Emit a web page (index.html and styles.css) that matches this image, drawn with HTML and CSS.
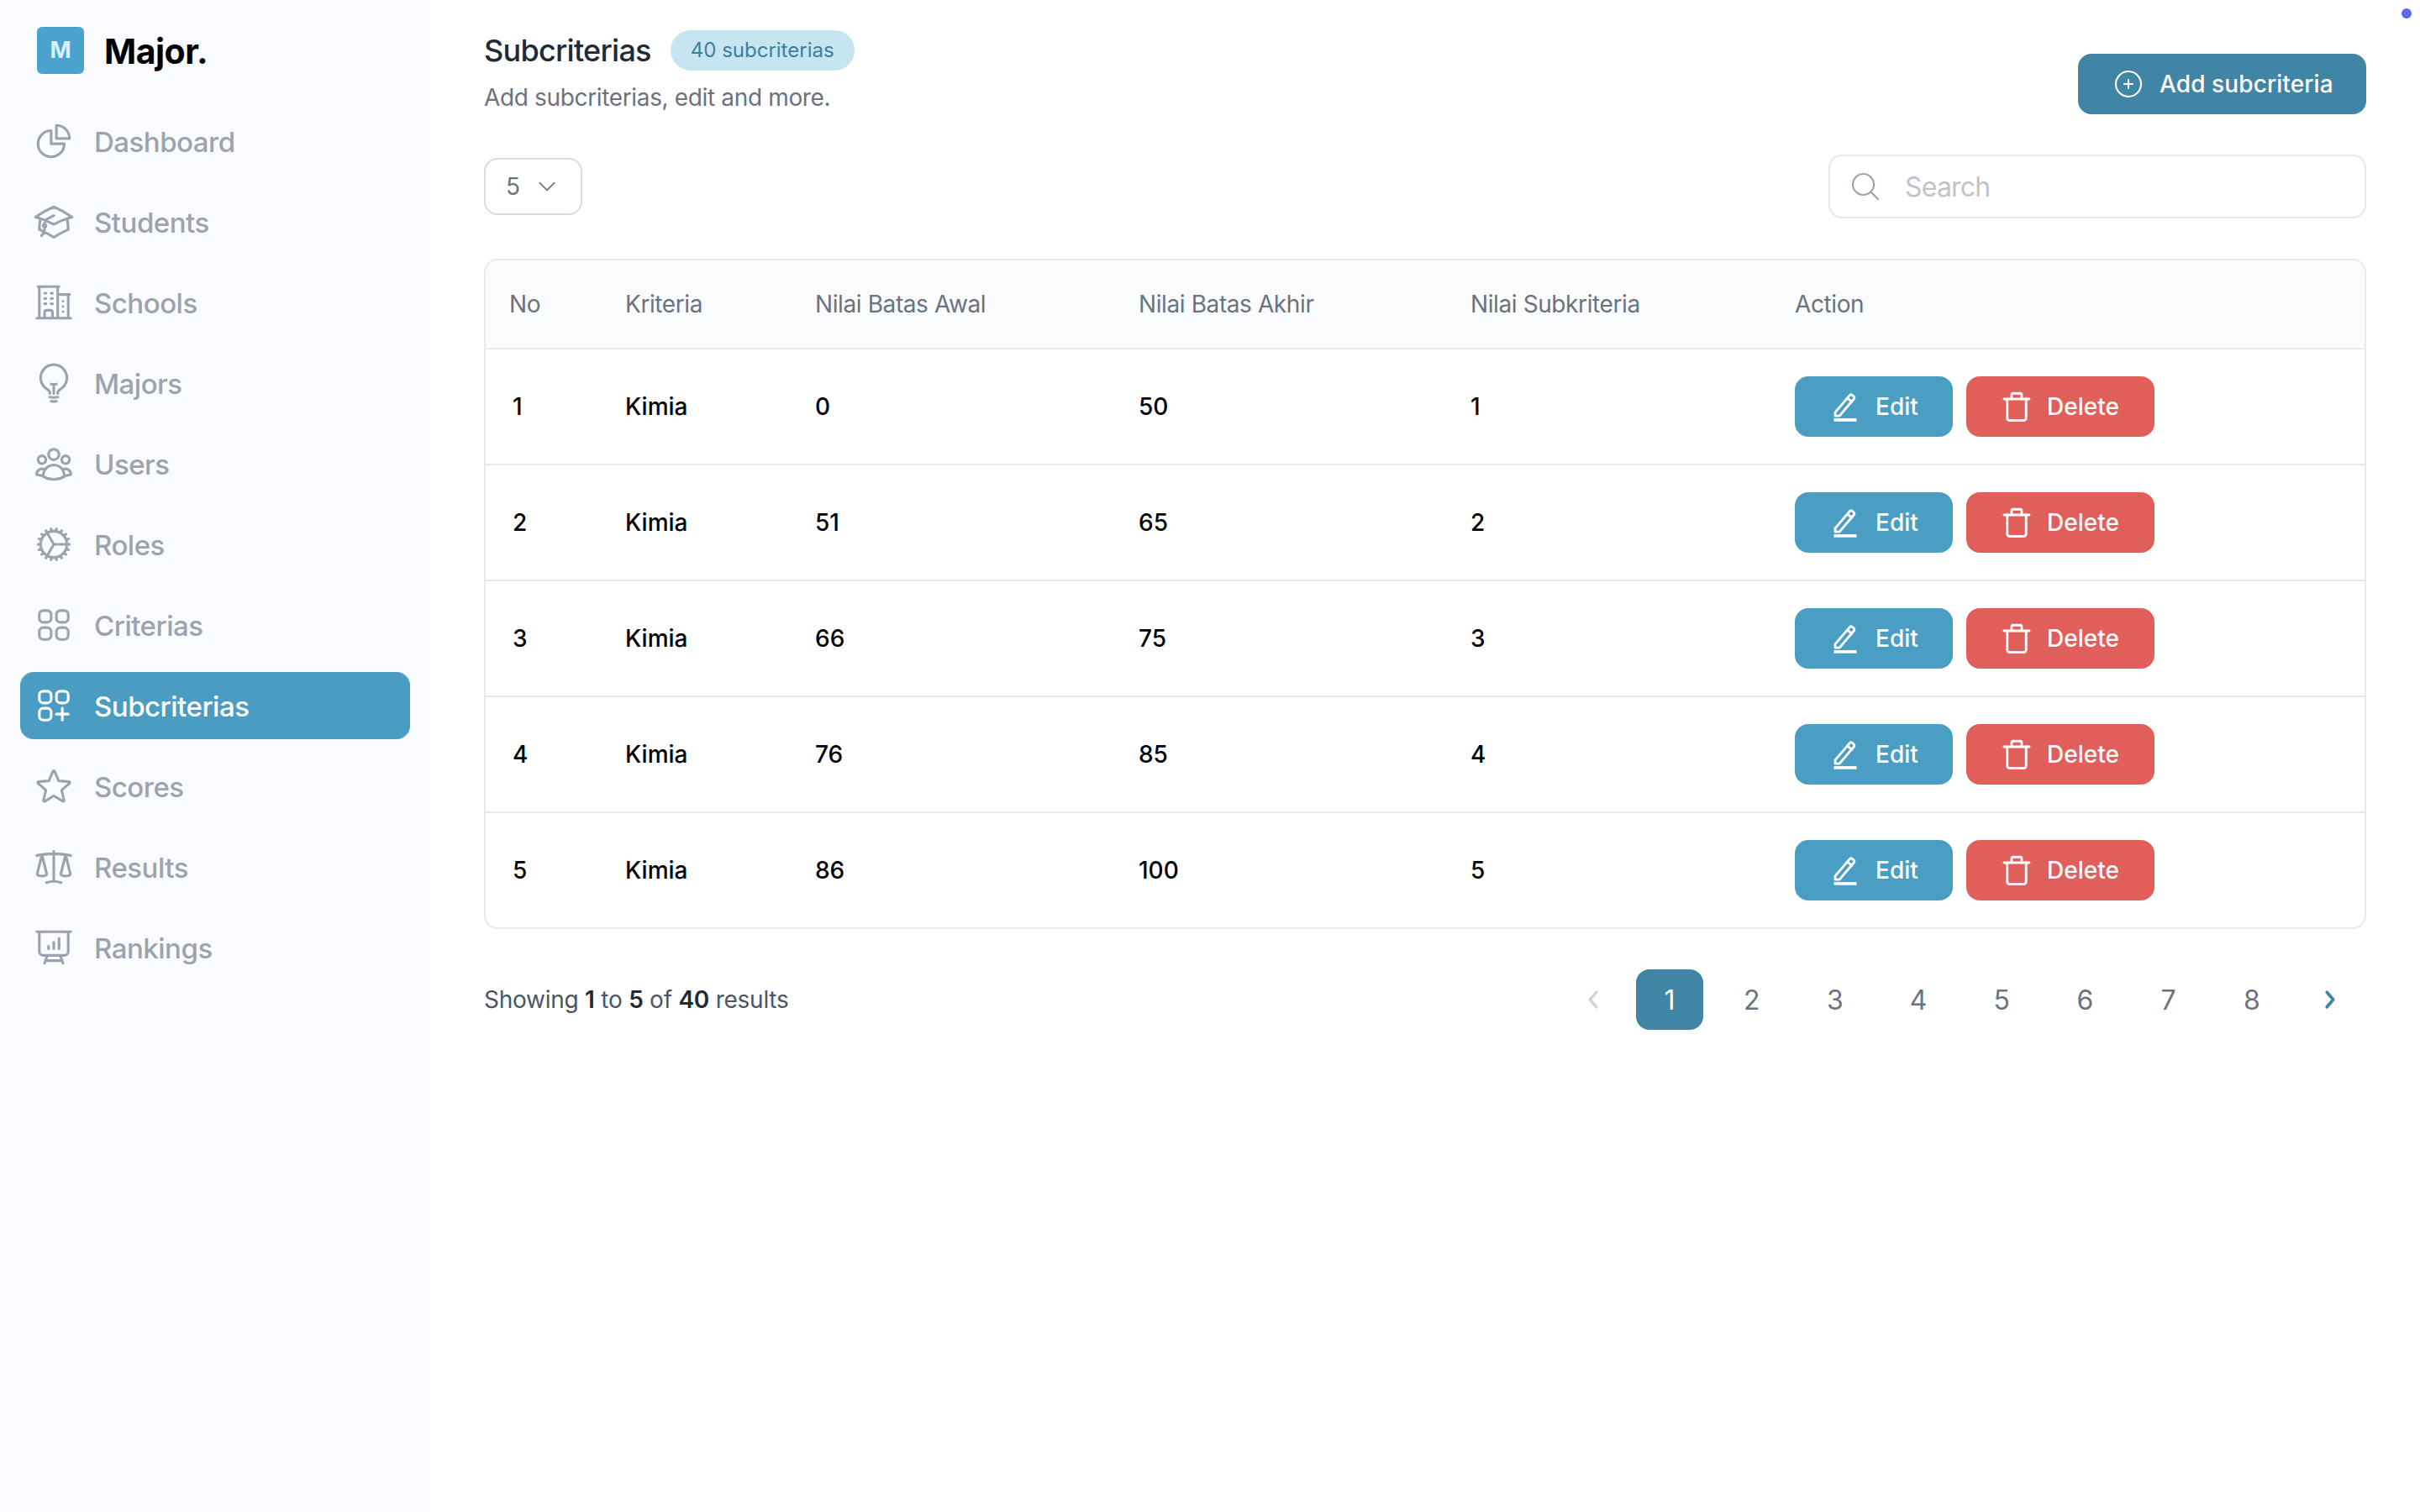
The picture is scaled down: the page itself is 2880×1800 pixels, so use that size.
FILE: index.html
```html
<!DOCTYPE html>
<html lang="en">
<head>
<meta charset="utf-8">
<title>Subcriterias</title>
<link rel="stylesheet" href="styles.css">
</head>
<body>
<svg class="sprite" xmlns="http://www.w3.org/2000/svg">
  <symbol id="i-pie" viewBox="0 0 24 24"><path d="M10.5 6a7.5 7.5 0 1 0 7.5 7.5h-7.5V6Z"/><path d="M13.5 10.5H21A7.5 7.5 0 0 0 13.5 3v7.5Z"/></symbol>
  <symbol id="i-cap" viewBox="0 0 24 24"><path d="M4.26 10.147a60.438 60.438 0 0 0-.491 6.347A48.62 48.62 0 0 1 12 20.904a48.62 48.62 0 0 1 8.232-4.41 60.46 60.46 0 0 0-.491-6.347m-15.482 0a50.636 50.636 0 0 0-2.658-.813A59.906 59.906 0 0 1 12 3.493a59.903 59.903 0 0 1 10.399 5.84c-.896.248-1.783.52-2.658.814m-15.482 0A50.717 50.717 0 0 1 12 13.489a50.702 50.702 0 0 1 7.74-3.342M6.75 15a.75.75 0 1 0 0-1.5.75.75 0 0 0 0 1.5Zm0 0v-3.675A55.378 55.378 0 0 1 12 8.443m-7.007 11.55A5.981 5.981 0 0 0 6.75 15.75v-1.5"/></symbol>
  <symbol id="i-building" viewBox="0 0 24 24"><path d="M2.25 21h19.5m-18-18v18m10.5-18v18m6-13.5V21M6.75 6.75h.75m-.75 3h.75m-.75 3h.75m3-6h.75m-.75 3h.75m-.75 3h.75M6.75 21v-3.375c0-.621.504-1.125 1.125-1.125h2.25c.621 0 1.125.504 1.125 1.125V21M3 3h12m-.75 4.5H21m-3.75 3.75h.008v.008h-.008v-.008Zm0 3h.008v.008h-.008v-.008Zm0 3h.008v.008h-.008v-.008Z"/></symbol>
  <symbol id="i-bulb" viewBox="0 0 24 24"><path d="M12 18v-5.25m0 0a6.01 6.01 0 0 0 1.5-.189m-1.5.189a6.01 6.01 0 0 1-1.5-.189m3.75 7.478a12.06 12.06 0 0 1-4.5 0m3.75 2.383a14.406 14.406 0 0 1-3 0M14.25 18v-.192c0-.983.658-1.823 1.508-2.316a7.5 7.5 0 1 0-7.517 0c.85.493 1.509 1.333 1.509 2.316V18"/></symbol>
  <symbol id="i-users" viewBox="0 0 24 24"><path d="M18 18.72a9.094 9.094 0 0 0 3.741-.479 3 3 0 0 0-4.682-2.72m.94 3.198.001.031c0 .225-.012.447-.037.666A11.944 11.944 0 0 1 12 21c-2.17 0-4.207-.576-5.963-1.584A6.062 6.062 0 0 1 6 18.719m12 0a5.971 5.971 0 0 0-.941-3.197m0 0A5.995 5.995 0 0 0 12 12.75a5.995 5.995 0 0 0-5.058 2.772m0 0a3 3 0 0 0-4.681 2.72 8.986 8.986 0 0 0 3.74.477m.94-3.197a5.971 5.971 0 0 0-.94 3.197M15 6.75a3 3 0 1 1-6 0 3 3 0 0 1 6 0Zm6 3a2.25 2.25 0 1 1-4.5 0 2.25 2.25 0 0 1 4.5 0Zm-13.5 0a2.25 2.25 0 1 1-4.5 0 2.25 2.25 0 0 1 4.5 0Z"/></symbol>
  <symbol id="i-cog" viewBox="0 0 24 24"><path d="M4.5 12a7.5 7.5 0 0 0 15 0m-15 0a7.5 7.5 0 1 1 15 0m-15 0H3m16.5 0H21m-1.5 0H12m-8.457 3.077 1.41-.513m14.095-5.13 1.41-.513M5.106 17.785l1.15-.964m11.49-9.642 1.149-.964M7.501 19.795l.75-1.3m7.5-12.99.75-1.3m-6.063 16.658.26-1.477m2.605-14.772.26-1.477m0 17.726-.26-1.477M10.698 4.614l-.26-1.477M16.5 19.794l-.75-1.299M7.5 4.205 12 12m6.894 5.785-1.149-.964M6.256 7.178l-1.15-.964m15.352 8.864-1.41-.513M4.954 9.435l-1.41-.514M12.002 12l-3.75 6.495"/></symbol>
  <symbol id="i-squares" viewBox="0 0 24 24"><path d="M3.75 6A2.25 2.25 0 0 1 6 3.75h2.25A2.25 2.25 0 0 1 10.5 6v2.25a2.25 2.25 0 0 1-2.25 2.25H6a2.25 2.25 0 0 1-2.25-2.25V6ZM3.75 15.75A2.25 2.25 0 0 1 6 13.5h2.25a2.25 2.25 0 0 1 2.25 2.25V18a2.25 2.25 0 0 1-2.25 2.25H6A2.25 2.25 0 0 1 3.75 18v-2.25ZM13.5 6a2.25 2.25 0 0 1 2.25-2.25H18A2.25 2.25 0 0 1 20.25 6v2.25A2.25 2.25 0 0 1 18 10.5h-2.25a2.25 2.25 0 0 1-2.25-2.25V6ZM13.5 15.75a2.25 2.25 0 0 1 2.25-2.25H18a2.25 2.25 0 0 1 2.25 2.25V18A2.25 2.25 0 0 1 18 20.25h-2.25A2.25 2.25 0 0 1 13.5 18v-2.25Z"/></symbol>
  <symbol id="i-squares-plus" viewBox="0 0 24 24"><path d="M13.5 16.875h3.375m0 0h3.375m-3.375 0V13.5m0 6.75V16.875M6 10.5h2.25a2.25 2.25 0 0 0 2.25-2.25V6a2.25 2.25 0 0 0-2.25-2.25H6A2.25 2.25 0 0 0 3.75 6v2.25A2.25 2.25 0 0 0 6 10.5Zm0 9.75h2.25A2.25 2.25 0 0 0 10.5 18v-2.25a2.25 2.25 0 0 0-2.25-2.25H6a2.25 2.25 0 0 0-2.25 2.25V18A2.25 2.25 0 0 0 6 20.25Zm9.75-9.75H18a2.25 2.25 0 0 0 2.25-2.25V6A2.25 2.25 0 0 0 18 3.75h-2.25A2.25 2.25 0 0 0 13.5 6v2.25a2.25 2.25 0 0 0 2.25 2.25Z"/></symbol>
  <symbol id="i-star" viewBox="0 0 24 24"><path d="M11.48 3.499a.562.562 0 0 1 1.04 0l2.125 5.111a.563.563 0 0 0 .475.345l5.518.442c.499.04.701.663.321.988l-4.204 3.602a.563.563 0 0 0-.182.557l1.285 5.385a.562.562 0 0 1-.84.61l-4.725-2.885a.562.562 0 0 0-.586 0L6.982 20.54a.562.562 0 0 1-.84-.61l1.285-5.386a.562.562 0 0 0-.182-.557l-4.204-3.602a.562.562 0 0 1 .321-.988l5.518-.442a.563.563 0 0 0 .475-.345L11.48 3.5Z"/></symbol>
  <symbol id="i-scale" viewBox="0 0 24 24"><path d="M12 3v17.25m0 0c-1.472 0-2.882.265-4.185.75M12 20.25c1.472 0 2.882.265 4.185.75M18.75 4.97A48.416 48.416 0 0 0 12 4.5c-2.291 0-4.545.16-6.75.47m13.5 0c1.01.143 2.01.317 3 .52m-3-.52 2.62 10.726c.122.499-.106 1.028-.589 1.202a5.988 5.988 0 0 1-2.031.352 5.988 5.988 0 0 1-2.031-.352c-.483-.174-.711-.703-.59-1.202L18.75 4.971Zm-16.5.52c.99-.203 1.99-.377 3-.52m0 0 2.62 10.726c.122.499-.106 1.028-.589 1.202a5.989 5.989 0 0 1-2.031.352 5.989 5.989 0 0 1-2.031-.352c-.483-.174-.711-.703-.59-1.202L5.25 4.971Z"/></symbol>
  <symbol id="i-board" viewBox="0 0 24 24"><path d="M3.75 3v11.25A2.25 2.25 0 0 0 6 16.5h2.25M3.75 3h-1.5m1.5 0h16.5m0 0h1.5m-1.5 0v11.25A2.25 2.25 0 0 1 18 16.5h-2.25m-7.5 0h7.5m-7.5 0-1 3m8.5-3 1 3m0 0 .5 1.5m-.5-1.5h-9.5m0 0-.5 1.5M9 11.25v1.5M12 9v3.75m3-6v6"/></symbol>
  <symbol id="i-plus" viewBox="0 0 24 24"><path d="M12 9v6m3-3H9m12 0a9 9 0 1 1-18 0 9 9 0 0 1 18 0Z"/></symbol>
  <symbol id="i-search" viewBox="0 0 24 24"><path d="m21 21-5.197-5.197m0 0A7.5 7.5 0 1 0 5.196 5.196a7.5 7.5 0 0 0 10.607 10.607Z"/></symbol>
  <symbol id="i-chev" viewBox="0 0 24 24"><path d="m19.5 8.25-7.5 7.5-7.5-7.5"/></symbol>
  <symbol id="i-left" viewBox="0 0 24 24"><path d="M15 5l-6 7 6 7"/></symbol>
  <symbol id="i-right" viewBox="0 0 24 24"><path d="M9 5l6 7-6 7"/></symbol>
  <symbol id="i-edit" viewBox="0 0 24 24"><path d="M4 16.6 15.4 3.2a1.6 1.6 0 0 1 2.2-.2l1 .8a1.6 1.6 0 0 1 .2 2.2L7.4 19.4H4v-2.8Z"/><path d="M13.6 5.3l3.6 3"/><path class="edit-line" d="M3 22.600h18"/></symbol>
  <symbol id="i-trash" viewBox="0 0 24 24"><path d="M2 6h20"/><path d="M8 6V2.8A1.3 1.3 0 0 1 9.3 1.500h5.400A1.300 1.300 0 0 1 16 2.800V6"/><path d="M4.500 6v15a2 2 0 0 0 2 2h11a2 2 0 0 0 2-2V6"/></symbol>
</svg>

<div class="dot"></div>

<div class="app">
  <aside class="sidebar">
    <div class="brand">
      <div class="brand-mark">M</div>
      <div class="brand-name">Major.</div>
    </div>
    <nav class="nav">
      <a class="nav-item"><svg class="nav-icon"><use href="#i-pie"/></svg><span>Dashboard</span></a>
      <a class="nav-item"><svg class="nav-icon"><use href="#i-cap"/></svg><span>Students</span></a>
      <a class="nav-item"><svg class="nav-icon"><use href="#i-building"/></svg><span>Schools</span></a>
      <a class="nav-item"><svg class="nav-icon"><use href="#i-bulb"/></svg><span>Majors</span></a>
      <a class="nav-item"><svg class="nav-icon"><use href="#i-users"/></svg><span>Users</span></a>
      <a class="nav-item"><svg class="nav-icon"><use href="#i-cog"/></svg><span>Roles</span></a>
      <a class="nav-item"><svg class="nav-icon"><use href="#i-squares"/></svg><span>Criterias</span></a>
      <a class="nav-item active"><svg class="nav-icon"><use href="#i-squares-plus"/></svg><span>Subcriterias</span></a>
      <a class="nav-item"><svg class="nav-icon"><use href="#i-star"/></svg><span>Scores</span></a>
      <a class="nav-item"><svg class="nav-icon"><use href="#i-scale"/></svg><span>Results</span></a>
      <a class="nav-item"><svg class="nav-icon"><use href="#i-board"/></svg><span>Rankings</span></a>
    </nav>
  </aside>

  <main class="main">
    <header class="page-head">
      <div class="page-title-block">
        <div class="title-row">
          <h1 class="title">Subcriterias</h1>
          <span class="badge">40 subcriterias</span>
        </div>
        <p class="subtitle">Add subcriterias, edit and more.</p>
      </div>
      <button class="btn btn-add"><svg class="btn-add-icon"><use href="#i-plus"/></svg>Add subcriteria</button>
    </header>

    <div class="toolbar">
      <div class="select"><span>5</span><svg class="select-icon"><use href="#i-chev"/></svg></div>
      <div class="search"><svg class="search-icon"><use href="#i-search"/></svg><span>Search</span></div>
    </div>

    <div class="table-card">
      <table class="table">
        <colgroup>
          <col class="c-no"><col class="c-kriteria"><col class="c-awal"><col class="c-akhir"><col class="c-sub"><col>
        </colgroup>
        <thead>
          <tr><th>No</th><th>Kriteria</th><th>Nilai Batas Awal</th><th>Nilai Batas Akhir</th><th>Nilai Subkriteria</th><th>Action</th></tr>
        </thead>
        <tbody>
          <tr><td>1</td><td>Kimia</td><td>0</td><td>50</td><td>1</td><td><div class="actions"><button class="btn btn-edit"><svg class="edit-icon"><use href="#i-edit"/></svg>Edit</button><button class="btn btn-delete"><svg class="trash-icon"><use href="#i-trash"/></svg>Delete</button></div></td></tr>
          <tr><td>2</td><td>Kimia</td><td>51</td><td>65</td><td>2</td><td><div class="actions"><button class="btn btn-edit"><svg class="edit-icon"><use href="#i-edit"/></svg>Edit</button><button class="btn btn-delete"><svg class="trash-icon"><use href="#i-trash"/></svg>Delete</button></div></td></tr>
          <tr><td>3</td><td>Kimia</td><td>66</td><td>75</td><td>3</td><td><div class="actions"><button class="btn btn-edit"><svg class="edit-icon"><use href="#i-edit"/></svg>Edit</button><button class="btn btn-delete"><svg class="trash-icon"><use href="#i-trash"/></svg>Delete</button></div></td></tr>
          <tr><td>4</td><td>Kimia</td><td>76</td><td>85</td><td>4</td><td><div class="actions"><button class="btn btn-edit"><svg class="edit-icon"><use href="#i-edit"/></svg>Edit</button><button class="btn btn-delete"><svg class="trash-icon"><use href="#i-trash"/></svg>Delete</button></div></td></tr>
          <tr><td>5</td><td>Kimia</td><td>86</td><td>100</td><td>5</td><td><div class="actions"><button class="btn btn-edit"><svg class="edit-icon"><use href="#i-edit"/></svg>Edit</button><button class="btn btn-delete"><svg class="trash-icon"><use href="#i-trash"/></svg>Delete</button></div></td></tr>
        </tbody>
      </table>
    </div>

    <footer class="table-foot">
      <p class="showing">Showing <b>1</b> to <b>5</b> of <b>40</b> results</p>
      <nav class="pager">
        <span class="pager-arrow prev"><svg class="pager-icon"><use href="#i-left"/></svg></span>
        <span class="page current">1</span>
        <span class="page">2</span>
        <span class="page">3</span>
        <span class="page">4</span>
        <span class="page">5</span>
        <span class="page">6</span>
        <span class="page">7</span>
        <span class="page">8</span>
        <span class="pager-arrow next"><svg class="pager-icon"><use href="#i-right"/></svg></span>
      </nav>
    </footer>
  </main>
</div>
</body>
</html>
```

FILE: styles.css
```css
* { box-sizing: border-box; }

html, body {
  margin: 0;
  padding: 0;
  height: 1800px;
  background: #fff;
  font-family: "Inter", "Liberation Sans", sans-serif;
}

.sprite { display: none; }

svg {
  fill: none;
  stroke: currentColor;
  stroke-width: 1.5;
  stroke-linecap: round;
  stroke-linejoin: round;
}

.dot {
  position: absolute;
  top: 10px;
  right: 10px;
  width: 12px;
  height: 12px;
  border-radius: 50%;
  background: #6366f1;
}

.app {
  display: flex;
  height: 1800px;
}

.sidebar {
  width: 512px;
  flex: none;
  background: #f9fbfe;
  padding: 31px 24px 0;
}

.brand {
  display: flex;
  align-items: center;
  gap: 24px;
  padding-left: 20px;
  height: 57px;
}

.brand-mark {
  width: 56px;
  height: 56px;
  border-radius: 6px;
  background: #4ba3cd;
  color: #d9f0f8;
  font-size: 27px;
  font-weight: 700;
  display: flex;
  align-items: center;
  justify-content: center;
}

.brand-name {
  margin-top: 2px;
  font-size: 41px;
  font-weight: 700;
  color: #000;
  letter-spacing: -0.5px;
}

.nav {
  display: flex;
  flex-direction: column;
  gap: 16px;
  margin-top: 40px;
}

.nav-item {
  display: flex;
  align-items: center;
  height: 80px;
  padding-left: 15px;
  gap: 23px;
  border-radius: 16px;
  font-size: 33px;
  font-weight: 500;
  letter-spacing: -0.5px;
  color: #9ca3af;
}

.nav-item span {
  margin-top: 2px;
}

.nav-item.active {
  background: #4b9cc2;
  color: #fff;
}

.nav-icon {
  width: 50px;
  height: 50px;
  flex: none;
}

.main {
  flex: 1;
  padding: 36px 64px 0;
  min-width: 0;
}

.page-head {
  display: flex;
  justify-content: space-between;
  align-items: flex-start;
  height: 100px;
}

.title-row {
  display: flex;
  align-items: center;
  gap: 23px;
}

.title {
  margin: 0;
  font-size: 36px;
  font-weight: 500;
  line-height: 48px;
  letter-spacing: -0.75px;
  color: #1f2937;
}

.badge {
  height: 48px;
  border-radius: 24px;
  padding: 0 24px;
  background: #c5e5f0;
  color: #3b7f9f;
  font-size: 24px;
  line-height: 48px;
}

.subtitle {
  margin: 12px 0 0;
  font-size: 28px;
  line-height: 40px;
  letter-spacing: -0.35px;
  color: #6b7280;
}

.btn {
  display: flex;
  align-items: center;
  height: 72px;
  border: 0;
  border-radius: 16px;
  color: #fff;
  font-family: inherit;
  font-size: 28px;
  font-weight: 500;
}

.btn-add {
  margin-top: 28px;
  width: 343px;
  padding: 0 0 0 40px;
  gap: 17px;
  letter-spacing: 0.1px;
  background: #4084a6;
}

.btn-add-icon {
  width: 40px;
  height: 40px;
  stroke-width: 1.25;
}

.toolbar {
  display: flex;
  justify-content: space-between;
  align-items: center;
  margin-top: 48px;
  height: 76px;
}

.select {
  display: flex;
  align-items: center;
  width: 117px;
  height: 68px;
  padding-left: 24px;
  gap: 18px;
  border: 2px solid #d8dbe0;
  border-radius: 16px;
  font-size: 28px;
  color: #6b7280;
}

.select-icon {
  width: 28px;
  height: 28px;
}

.search {
  display: flex;
  align-items: center;
  width: 640px;
  height: 76px;
  padding-left: 22px;
  gap: 27px;
  border: 2px solid #e5e7eb;
  border-radius: 16px;
  font-size: 32px;
  letter-spacing: -0.8px;
  color: #c0c4ca;
}

.search-icon {
  width: 40px;
  height: 40px;
  color: #9ca3af;
  stroke-width: 1.3;
}

.table-card {
  margin-top: 48px;
  border: 2px solid #e8eaed;
  border-radius: 16px;
  overflow: hidden;
}

.table {
  width: 100%;
  table-layout: fixed;
  border-collapse: collapse;
}

.c-no { width: 138px; }
.c-kriteria { width: 226px; }
.c-awal { width: 385px; }
.c-akhir { width: 395px; }
.c-sub { width: 386px; }

.table th {
  height: 105px;
  padding: 0 0 0 28px;
  background: #f9fbfd;
  border-bottom: 2px solid #e8eaed;
  text-align: left;
  font-size: 28px;
  font-weight: 400;
  letter-spacing: -0.4px;
  color: #6b7280;
}

.table td {
  height: 138px;
  padding: 0 0 0 28px;
  border-bottom: 2px solid #e8eaed;
  font-size: 28px;
  font-weight: 500;
  color: #000;
}

.table td:first-child {
  padding-left: 32px;
}

.table tbody tr:last-child td {
  height: 137px;
  border-bottom: 0;
}

.actions {
  display: flex;
  gap: 16px;
}

.btn-edit {
  width: 188px;
  padding-left: 42px;
  gap: 18px;
  background: #4b9ec3;
}

.btn-delete {
  width: 224px;
  padding-left: 42px;
  gap: 18px;
  background: #e05f5a;
}

.edit-icon,
.trash-icon {
  width: 36px;
  height: 36px;
  flex: none;
  stroke-width: 1.9;
}

.edit-line {
  stroke-width: 2.400;
  stroke-linecap: butt;
}

.table-foot {
  display: flex;
  justify-content: space-between;
  align-items: center;
  margin-top: 48px;
  height: 72px;
}

.showing {
  margin: 0;
  font-size: 28px;
  letter-spacing: -0.25px;
  color: #4b5563;
}

.showing b {
  font-weight: 600;
  color: #1f2937;
}

.pager {
  display: flex;
  align-items: center;
  font-size: 32px;
  color: #6b7280;
}

.pager-arrow {
  display: flex;
  align-items: center;
  justify-content: center;
  width: 86.600px;
  height: 72px;
}

.pager-arrow.prev {
  margin-right: 8px;
  color: #d1d5db;
}

.pager-arrow.next {
  color: #4084a6;
}

.pager-icon {
  width: 30px;
  height: 30px;
  stroke-width: 3;
}

.page {
  display: flex;
  align-items: center;
  justify-content: center;
  width: 99.200px;
  height: 72px;
}

.page.current {
  width: 80px;
  margin-right: 8px;
  border-radius: 16px;
  background: #4084a6;
  color: #fff;
}
```
